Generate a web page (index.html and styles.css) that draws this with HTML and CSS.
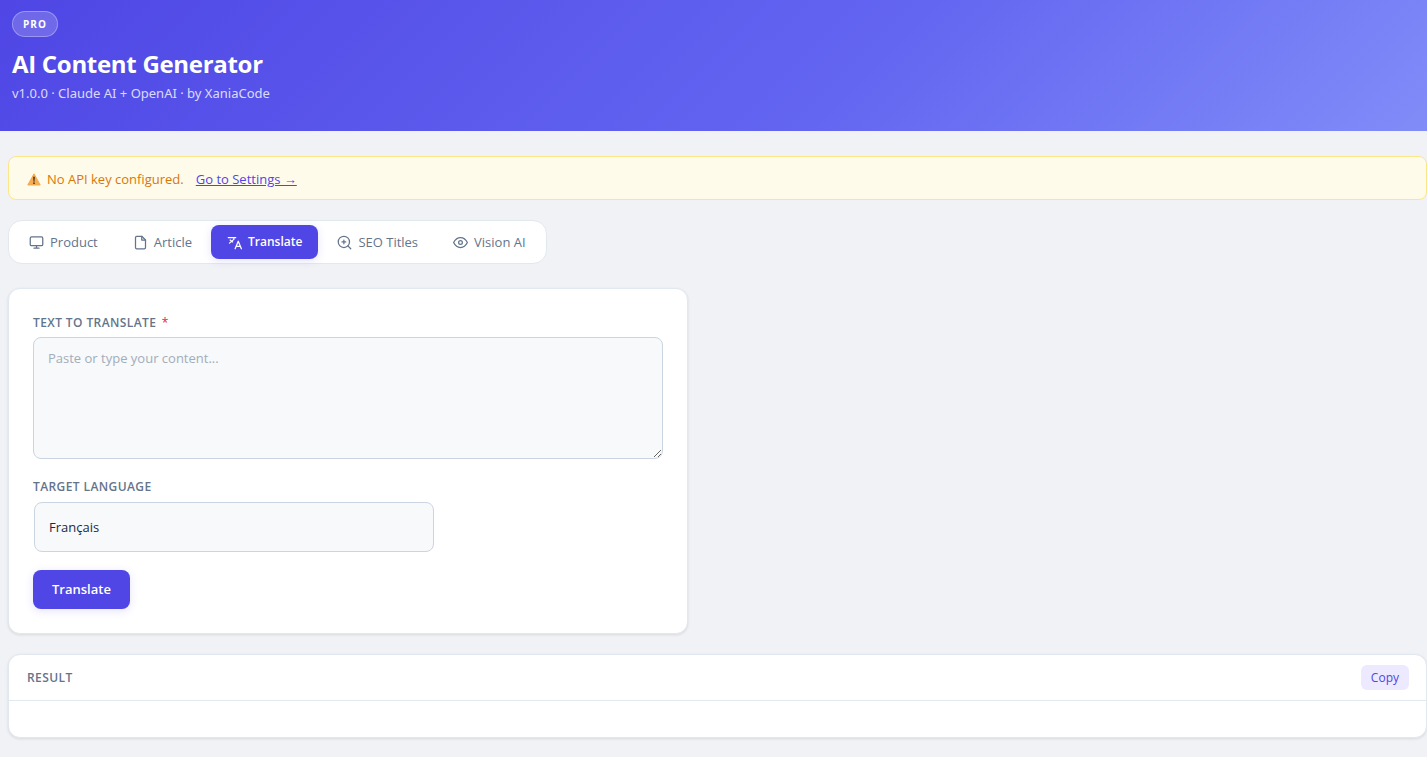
FILE: index.html
```html
<!DOCTYPE html>
<html lang="en">
<head>
<meta charset="utf-8">
<meta name="viewport" content="width=device-width, initial-scale=1">
<title>AI Content Generator</title>
<link rel="stylesheet" href="styles.css">
</head>
<body>
<header class="hero">
  <span class="hero-badge">PRO</span>
  <h1 class="hero-title">AI Content Generator</h1>
  <p class="hero-sub">v1.0.0 · Claude AI + OpenAI · by XaniaCode</p>
</header>
<main class="content">
  <div class="notice">
    <svg class="notice-icon" viewBox="0 0 14 14" aria-hidden="true">
      <path d="M7 1.800 13.200 13H.8z" fill="#f7ae52" stroke="#f3a950" stroke-width="1" stroke-linejoin="round"/>
      <path d="M6.100 4.800h1.800L7.500 9.700h-1z" fill="#4a3420"/>
      <circle cx="7" cy="11.200" r=".9" fill="#4a3420"/>
    </svg>
    <span class="notice-text">No API key configured.</span>
    <a class="notice-link" href="#settings">Go to Settings →</a>
  </div>

  <nav class="tabs">
    <button class="tab" type="button">
      <svg class="icon" viewBox="0 0 24 24"><rect x="2" y="3" width="20" height="14" rx="2"/><path d="M8 21h8M12 17v4"/></svg>
      Product
    </button>
    <button class="tab" type="button">
      <svg class="icon" viewBox="0 0 24 24"><path d="M14 2H6a2 2 0 0 0-2 2v16a2 2 0 0 0 2 2h12a2 2 0 0 0 2-2V8z"/><path d="M14 2v6h6"/></svg>
      Article
    </button>
    <button class="tab tab-active" type="button">
      <svg class="icon" viewBox="0 0 24 24"><path d="M2 4h12M4 13l7-6V4M5 8l4 3M13 22l5-12 5 12M15 18h6"/></svg>
      Translate
    </button>
    <button class="tab" type="button">
      <svg class="icon" viewBox="0 0 24 24"><circle cx="11" cy="11" r="9"/><path d="m22 22-4.600-4.600M11 8v6M8 11h6"/></svg>
      SEO Titles
    </button>
    <button class="tab" type="button">
      <svg class="icon" viewBox="0 0 24 24"><path d="M1 12s4-8 11-8 11 8 11 8-4 8-11 8-11-8-11-8z"/><circle cx="12" cy="12" r="3"/></svg>
      Vision AI
    </button>
  </nav>

  <form class="card form-card">
    <label class="label" for="source">TEXT TO TRANSLATE <span class="required">*</span></label>
    <textarea class="field source" id="source" placeholder="Paste or type your content..."></textarea>
    <label class="label" for="language">TARGET LANGUAGE</label>
    <select class="field language" id="language"><option>Français</option></select>
    <button class="submit" type="button">Translate</button>
  </form>

  <section class="card result">
    <div class="result-head">
      <h2 class="result-title">RESULT</h2>
      <button class="copy" type="button">Copy</button>
    </div>
    <div class="result-body"></div>
  </section>
</main>
</body>
</html>
```
FILE: styles.css
```css
* {
  box-sizing: border-box;
}

body {
  margin: 0;
  background: #f0f2f5;
  color: #1e293b;
  font-family: "Segoe UI", "Open Sans", "Noto Sans", sans-serif;
  font-size: 13px;
  line-height: 20px;
}

button,
textarea,
select {
  font: inherit;
}

.hero {
  padding: 11px 12px 28px;
  background: linear-gradient(135deg, #4f46e5 0%, #6366f1 60%, #818cf8 100%);
  color: #fff;
}

.hero-badge {
  display: inline-block;
  padding: 4px 10px;
  border: 1px solid rgba(255, 255, 255, 0.3);
  border-radius: 20px;
  background: rgba(255, 255, 255, 0.18);
  font-size: 10px;
  font-weight: 700;
  line-height: 16px;
  letter-spacing: 1px;
  vertical-align: top;
}

.hero-title {
  margin: 12px 0 4px;
  font-size: 24px;
  font-weight: 700;
  line-height: 30px;
  letter-spacing: -0.3px;
}

.hero-sub {
  margin: 0;
  color: rgba(255, 255, 255, 0.8);
  font-family: "Segoe UI", "Noto Sans", sans-serif;
}

.content {
  display: flex;
  flex-direction: column;
  align-items: flex-start;
  padding: 25px 0 18px 8px;
}

.notice {
  display: flex;
  align-items: center;
  align-self: stretch;
  padding: 12px 18px 10px;
  border: 1px solid #fde68a;
  border-radius: 8px;
  background: #fffbeb;
  color: #d97706;
}

.notice-icon {
  width: 14px;
  height: 14px;
  margin-right: 6px;
}

.notice-link {
  margin-left: 12px;
  color: #4f46e5;
}

.tabs {
  display: flex;
  gap: 3px;
  margin: 20px 0 24px;
  padding: 4px;
  border: 1px solid #e2e8f0;
  border-radius: 14px;
  background: #fff;
}

.tab {
  display: flex;
  align-items: center;
  gap: 6px;
  padding: 7px 16px;
  border: 0;
  border-radius: 8px;
  background: none;
  color: #64748b;
  font-size: 13px;
  font-weight: 500;
  line-height: 20px;
}

.tab-active {
  background: #4f46e5;
  color: #fff;
  font-size: 12px;
  font-weight: 600;
  box-shadow: 0 2px 8px rgba(79, 70, 229, 0.15);
}

.icon {
  width: 15px;
  height: 15px;
  fill: none;
  stroke: currentColor;
  stroke-width: 2;
  stroke-linecap: round;
  stroke-linejoin: round;
}

.card {
  border: 1px solid #e2e8f0;
  border-radius: 12px;
  background: #fff;
  box-shadow: 0 1px 3px rgba(0, 0, 0, 0.1);
}

.form-card {
  display: flex;
  flex-direction: column;
  align-items: flex-start;
  width: 100%;
  max-width: 680px;
  padding: 24px;
}

.label {
  margin-bottom: 5px;
  color: #64748b;
  font-size: 12px;
  font-weight: 600;
  line-height: 19px;
  letter-spacing: 0.4px;
}

.required {
  margin-left: 2px;
  color: #e11d48;
  font-weight: 400;
}

.field {
  border: 1px solid #cbd5e1;
  border-radius: 8px;
  background: #f7f9fb;
  color: #1e293b;
}

.source {
  width: 100%;
  height: 122px;
  margin-bottom: 18px;
  padding: 10px 14px;
  resize: vertical;
}

.source::placeholder {
  color: #a3adba;
}

.language {
  width: 100%;
  max-width: 400px;
  height: 50px;
  margin: 1px 1px 18px;
  padding: 0 14px;
  appearance: none;
}

.submit {
  padding: 9px 19px;
  border: 0;
  border-radius: 8px;
  background: #4f46e5;
  color: #fff;
  font-weight: 600;
  line-height: 21px;
  box-shadow: 0 2px 8px rgba(79, 70, 229, 0.15);
}

.result {
  align-self: stretch;
  margin-top: 20px;
}

.result-head {
  display: flex;
  align-items: center;
  justify-content: space-between;
  padding: 10px 17px 10px 18px;
  border-bottom: 1px solid #e2e8f0;
}

.result-title {
  margin: 0;
  color: #64748b;
  font-size: 12px;
  font-weight: 600;
  letter-spacing: 0.4px;
}

.copy {
  padding: 3px 10px;
  border: 0;
  border-radius: 6px;
  background: #ede9fe;
  color: #4f46e5;
  font-size: 12px;
  font-weight: 500;
  line-height: 19px;
}

.result-body {
  min-height: 36px;
}
```
